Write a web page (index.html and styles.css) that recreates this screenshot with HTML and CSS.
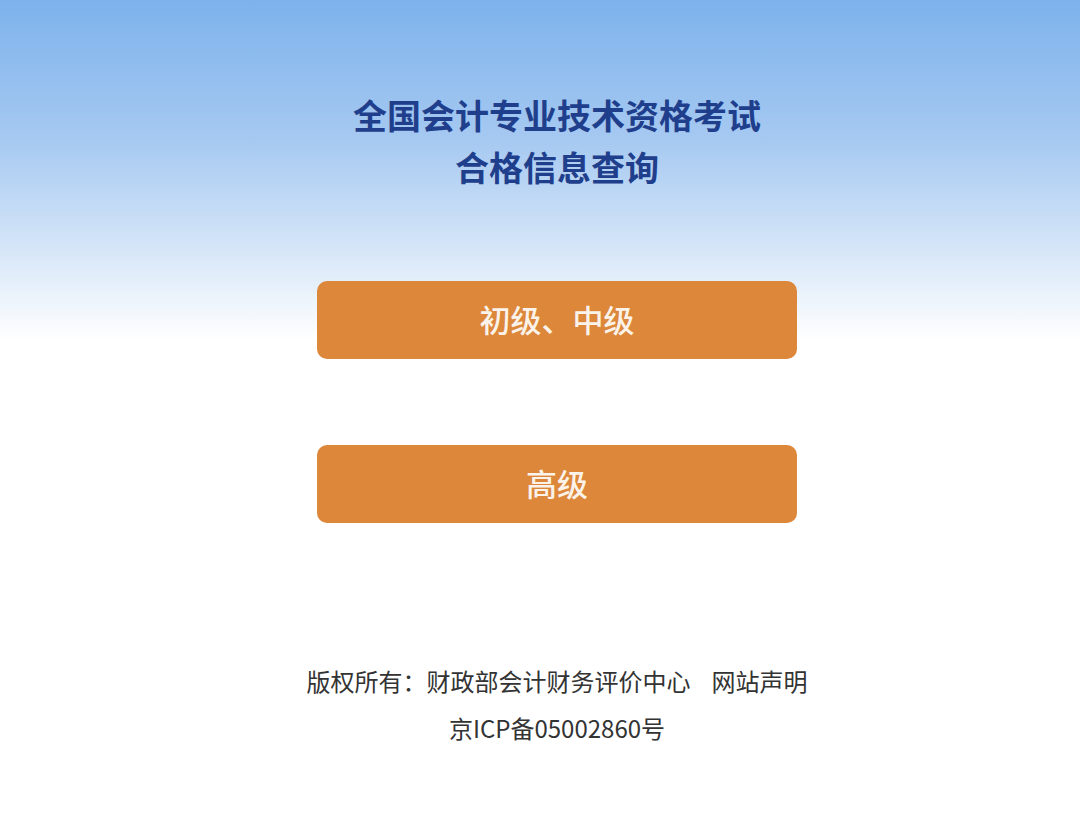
FILE: index.html
```html
<!DOCTYPE html>
<html lang="zh-CN">
<head>
<meta charset="utf-8">
<title>合格信息查询</title>
<link rel="stylesheet" href="styles.css">
</head>
<body>
<div class="page">
  <h1 class="title">
    <span class="title-line">全国会计专业技术资格考试</span>
    <span class="title-line">合格信息查询</span>
  </h1>
  <div class="buttons">
    <a class="btn">初级、中级</a>
    <a class="btn">高级</a>
  </div>
  <div class="footer">
    <p class="footer-line">版权所有：财政部会计财务评价中心<span class="sep"></span>网站声明</p>
    <p class="footer-line">京ICP备05002860号</p>
  </div>
</div>
</body>
</html>
```
FILE: styles.css
```css
html, body {
  margin: 0;
  padding: 0;
  height: 100%;
}
body {
  font-family: "Noto Sans CJK SC", "Noto Sans", sans-serif;
  background: linear-gradient(to bottom, #7db2ec 0px, #a6c9f1 140px, #d6e6f8 250px, #ffffff 340px, #ffffff 100%);
  background-repeat: no-repeat;
  background-color: #ffffff;
}
.page {
  display: flex;
  flex-direction: column;
  align-items: center;
  padding-top: 89px;
  padding-left: 34px;
}
.title {
  margin: 0;
  display: flex;
  flex-direction: column;
  align-items: center;
  font-size: 34px;
  line-height: 52px;
  font-weight: 700;
  color: #1f3f8c;
}
.buttons {
  margin-top: 88px;
  display: flex;
  flex-direction: column;
  gap: 86px;
}
.btn {
  display: flex;
  align-items: center;
  justify-content: center;
  width: 480px;
  height: 78px;
  padding-bottom: 3px;
  box-sizing: border-box;
  border-radius: 10px;
  background: #dc873a;
  color: #fbf3ea;
  font-size: 31px;
  font-weight: 500;
  text-decoration: none;
}
.footer {
  margin-top: 134px;
  display: flex;
  flex-direction: column;
  align-items: center;
}
.footer-line {
  margin: 0;
  font-size: 24px;
  line-height: 47px;
  color: #333333;
}
.sep {
  display: inline-block;
  width: 21px;
}
```
